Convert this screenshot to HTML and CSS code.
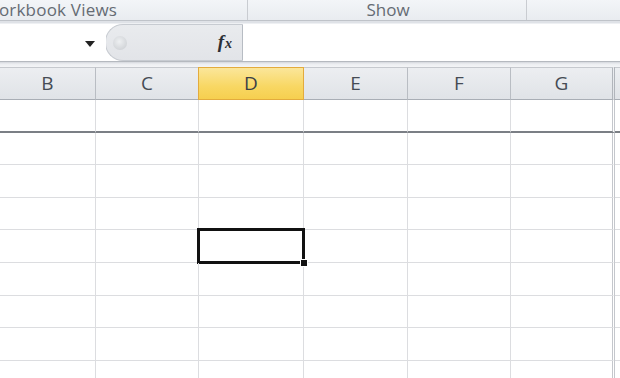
FILE: index.html
```html
<!DOCTYPE html>
<html>
<head>
<meta charset="utf-8">
<link rel="stylesheet" href="styles.css">
</head>
<body>
<div class="app">
  <div class="ribbon">
    <div class="grp grp-views"><span>Workbook Views</span></div>
    <div class="grp grp-show"><span>Show</span></div>
    <div class="grp grp-rest"></div>
  </div>
  <div class="ribbon-gap"></div>
  <div class="fbar">
    <div class="namebox">
      <svg class="arrow" width="10" height="6" viewBox="0 0 10 6"><path d="M0 0 H10 L5 6 Z" fill="#222"/></svg>
    </div>
    <div class="pill">
      <span class="knob"></span>
      <span class="fx"><i>f</i><i class="x">x</i></span>
    </div>
    <div class="formula"></div>
  </div>
  <div class="fbar-gap"></div>
  <div class="sheet">
    <div class="row head">
      <div class="c w1">B</div>
      <div class="c w2">C</div>
      <div class="c w3 sel">D</div>
      <div class="c w4">E</div>
      <div class="c w5">F</div>
      <div class="c w6">G</div>
      <div class="c w7"></div>
    </div>
    <div class="row r32 frozen">
      <div class="c w1"></div><div class="c w2"></div><div class="c w3"></div><div class="c w4"></div><div class="c w5"></div><div class="c w6"></div><div class="c w7"></div>
    </div>
    <div class="row r32">
      <div class="c w1"></div><div class="c w2"></div><div class="c w3"></div><div class="c w4"></div><div class="c w5"></div><div class="c w6"></div><div class="c w7"></div>
    </div>
    <div class="row r33">
      <div class="c w1"></div><div class="c w2"></div><div class="c w3"></div><div class="c w4"></div><div class="c w5"></div><div class="c w6"></div><div class="c w7"></div>
    </div>
    <div class="row r32">
      <div class="c w1"></div><div class="c w2"></div><div class="c w3"></div><div class="c w4"></div><div class="c w5"></div><div class="c w6"></div><div class="c w7"></div>
    </div>
    <div class="row r33">
      <div class="c w1"></div><div class="c w2"></div><div class="c w3 active"><span class="handle"></span></div><div class="c w4"></div><div class="c w5"></div><div class="c w6"></div><div class="c w7"></div>
    </div>
    <div class="row r33">
      <div class="c w1"></div><div class="c w2"></div><div class="c w3"></div><div class="c w4"></div><div class="c w5"></div><div class="c w6"></div><div class="c w7"></div>
    </div>
    <div class="row r32">
      <div class="c w1"></div><div class="c w2"></div><div class="c w3"></div><div class="c w4"></div><div class="c w5"></div><div class="c w6"></div><div class="c w7"></div>
    </div>
    <div class="row r33">
      <div class="c w1"></div><div class="c w2"></div><div class="c w3"></div><div class="c w4"></div><div class="c w5"></div><div class="c w6"></div><div class="c w7"></div>
    </div>
    <div class="row r32">
      <div class="c w1"></div><div class="c w2"></div><div class="c w3"></div><div class="c w4"></div><div class="c w5"></div><div class="c w6"></div><div class="c w7"></div>
    </div>
  </div>
</div>
</body>
</html>
```
FILE: styles.css
```css
* { box-sizing: border-box; }
html, body { margin: 0; padding: 0; }
body {
  width: 620px;
  height: 378px;
  overflow: hidden;
  background: #ffffff;
  font-family: "Open Sans", "Noto Sans", "DejaVu Sans", sans-serif;
}
.app { width: 620px; height: 378px; overflow: hidden; display: flex; flex-direction: column; }

.ribbon {
  height: 21px;
  display: flex;
  background: linear-gradient(#f3f5f8, #e9ecf0);
  border-bottom: 1px solid #bfc3c9;
  flex: none;
}
.grp {
  height: 20px;
  border-right: 1px solid #c9ccd1;
  color: #656b73;
  font-size: 17px;
  line-height: 20px;
  display: flex;
  justify-content: center;
  white-space: nowrap;
}
.grp-views { width: 248px; justify-content: flex-start; }
.grp-views span { margin-left: -17px; letter-spacing: 0.2px; }
.grp-show { width: 279px; }
.grp-show span { margin-left: 2px; }
.grp-rest { flex: 1; border-right: none; }

.ribbon-gap { height: 3px; background: #dfe2e7; border-bottom: 1px solid #eef0f3; flex: none; }

.fbar {
  height: 37px;
  display: flex;
  background: #ffffff;
  flex: none;
}
.namebox {
  width: 106px;
  position: relative;
  background: #fff;
}
.arrow { position: absolute; left: 85px; top: 17px; }
.pill {
  width: 138px;
  margin-left: -1px;
  background: linear-gradient(#e9ebee, #e2e4e8);
  border: 1px solid #c7cbd1;
  border-right: 1px solid #b7bcc3;
  border-radius: 18px 0 0 18px;
  display: flex;
  align-items: center;
  padding-left: 7px;
}
.knob {
  width: 14px;
  height: 14px;
  border-radius: 50%;
  background: radial-gradient(circle at 45% 40%, #eef0f2, #cdd0d4 85%);
}
.fx {
  margin-left: auto;
  margin-right: 10px;
  font-family: "Liberation Serif", "DejaVu Serif", serif;
  font-weight: bold;
  color: #2b2f36;
  font-size: 19px;
  line-height: 19px;
}
.fx i { font-style: italic; }
.fx .x { font-size: 14px; margin-left: 1px; }
.formula { flex: 1; background: #fff; }

.fbar-gap {
  height: 6px;
  border-top: 1px solid #b5b9bf;
  background: linear-gradient(#d4d7dc, #eceef1 40%, #f4f5f7);
  flex: none;
}

.sheet { flex: 1; display: flex; flex-direction: column; }
.row { display: flex; flex: none; }
.c {
  flex: none;
  border-right: 1px solid #dcdde0;
  border-bottom: 1px solid #dcdde0;
  position: relative;
}
.w1 { width: 96px; }
.w2 { width: 103px; }
.w3 { width: 105px; }
.w4 { width: 104px; }
.w5 { width: 103px; }
.w6 { width: 104px; border-right: 3px double #c4c7cc; }
.w7 { flex: 1; border-right: none; }

.head { height: 33px; }
.head .c {
  background: linear-gradient(#eceef1, #e0e3e7);
  border-right: 1px solid #b9bdc3;
  border-bottom: 1px solid #a9aeb5;
  border-top: 1px solid #c6c9ce;
  color: #454b54;
  font-size: 19px;
  line-height: 30px;
  text-align: center;
}
.head .w6 { border-right: 3px double #b1b5bb; }
.head .w7 { border-right: none; }
.head .sel {
  background: linear-gradient(#fbe69a, #f8d763 60%, #f6cf4f);
  border: 1px solid #e3ab3d;
  border-left: 1px solid #e3ab3d;
  margin-left: -1px;
  width: 106px;
  color: #3a3f47;
}

.r32 { height: 32px; }
.r33 { height: 33px; }
.frozen .c { border-bottom: 2px solid #7b7f85; }
.frozen { height: 33px; }

.active::before {
  content: "";
  position: absolute;
  left: -2px;
  top: -2px;
  right: -2px;
  bottom: -2px;
  border: 3px solid #111;
}
.handle {
  position: absolute;
  right: -5px;
  bottom: -5px;
  width: 8px;
  height: 8px;
  background: #111;
  border: 1px solid #fff;
  z-index: 2;
}
```
